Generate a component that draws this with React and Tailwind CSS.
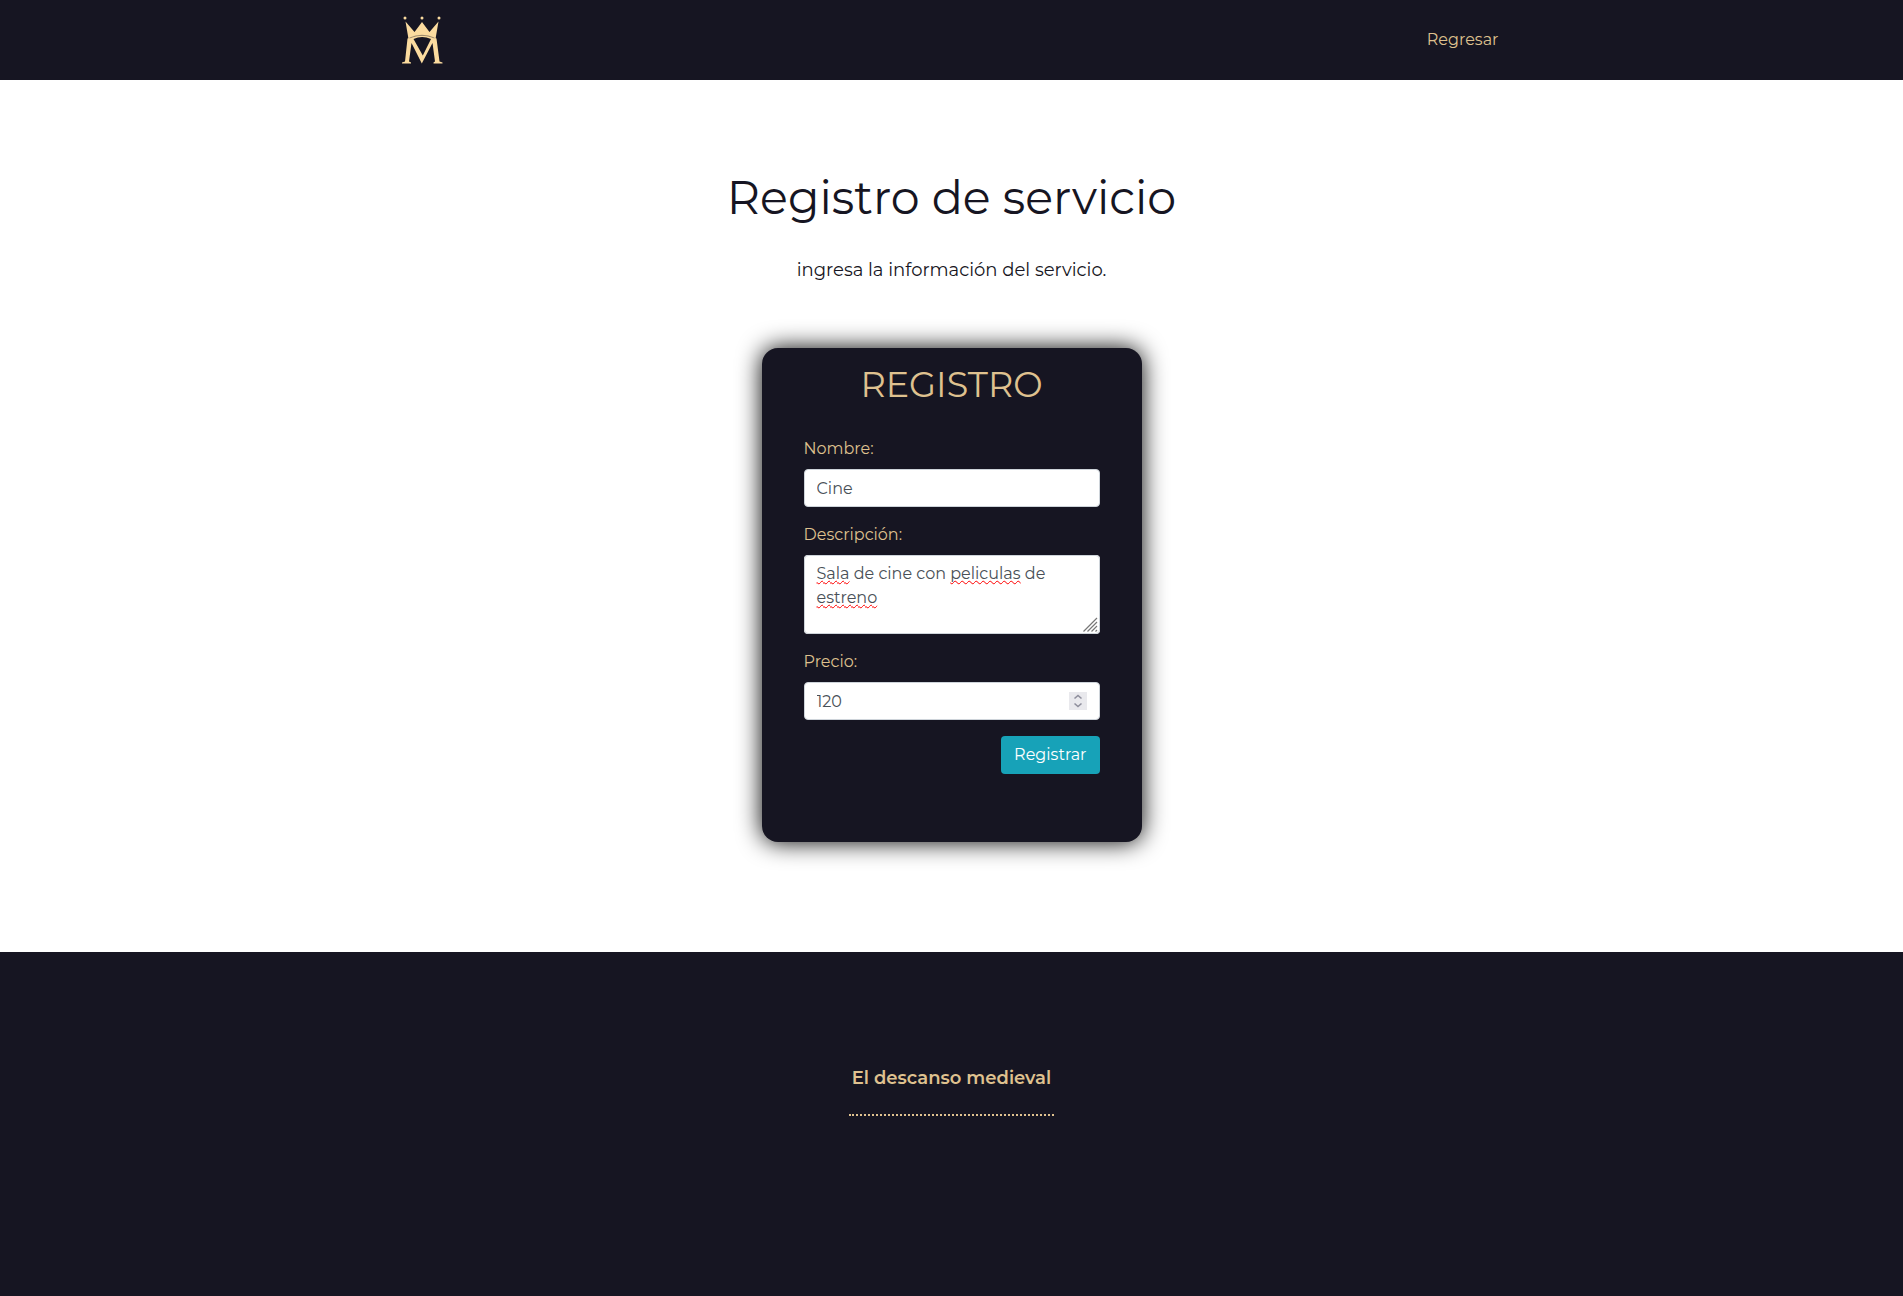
import { useState } from "react";

const inputClass =
  "block w-full rounded border border-[#ced4da] px-3 text-base leading-6 text-[#495057] outline-none";

function Logo() {
  return (
    <svg viewBox="0 0 42 50" className="h-[50px] w-[42px]" fill="#fbdb9f" aria-label="El descanso medieval" role="img">
      <circle cx="4" cy="3" r="1.5" />
      <circle cx="21" cy="3" r="1.5" />
      <circle cx="38" cy="3" r="1.5" />
      <path d="M4.500 6.500 L13.500 17 L21 7 L28.500 17 L37.500 6.500 L34.500 24 Q21 17.500 7.500 24 Z" />
      <path d="M6.500 23.500 Q21 17.500 35.500 23.500 L38.500 46.500 L41.500 47.500 V48.500 H32.500 V47.500 L34 46.500 L31.500 28 L20.800 48.500 L10.500 28 L8 46.500 L10 47.500 V48.500 H1 V47.500 L4 46.500 Z M12.500 24 L21.800 40.500 L30 24 Q21 20 12.500 24 Z" fillRule="evenodd" />
      <path d="M8.500 23 Q21 17.500 33.500 23" fill="none" stroke="#161522" strokeWidth="0.400" />
    </svg>
  );
}

export default function App() {
  const [name, setName] = useState("Cine");
  const [description, setDescription] = useState("Sala de cine con peliculas de estreno");
  const [price, setPrice] = useState("120");
  const flagged = ["Sala", "peliculas", "estreno"];

  return (
    <div className="min-h-screen bg-[#161522] font-[Montserrat,Inter,sans-serif] text-base text-[#161522]">
      <header className="bg-[#161522]">
        <nav className="mx-auto flex h-20 max-w-[1140px] items-center justify-between px-[15px]">
          <a href="#" className="ml-1">
            <Logo />
          </a>
          <a href="#" className="px-2 text-[#dfc18f]">Regresar</a>
        </nav>
      </header>

      <main className="bg-white pt-20 pb-[110px]">
        <h1 className="pt-2 text-center text-[46px] leading-[60px]">Registro de servicio</h1>
        <p className="mt-7 text-center text-lg leading-7">ingresa la información del servicio.</p>

        <form
          className="mx-auto mt-16 w-full max-w-[380px] rounded-2xl bg-[#161522] px-[42px] pt-4 pb-[68px] text-[#dfc18f] shadow-[0_0_25px_#000000]"
          onSubmit={(e) => e.preventDefault()}
        >
          <h2 className="mb-[31px] text-center text-[35px] leading-[42px]">REGISTRO</h2>

          <label htmlFor="nombre" className="mb-2 block leading-6">Nombre:</label>
          <input id="nombre" type="text" value={name} onChange={(e) => setName(e.target.value)} className={`${inputClass} mb-4 h-[38px] bg-white`} />

          <label htmlFor="descripcion" className="mb-2 block leading-6">Descripción:</label>
          <div className="relative mb-4 rounded bg-white">
            <div aria-hidden="true" className="absolute inset-0 px-[13px] py-[7px] leading-6 text-transparent">
              {description.split(" ").map((word, i) => (
                <span key={i}>
                  <span className={flagged.includes(word) ? "underline decoration-[#ff0000] decoration-wavy decoration-1 underline-offset-1 [text-decoration-skip-ink:none]" : ""}>{word}</span>{" "}
                </span>
              ))}
            </div>
            <textarea id="descripcion" spellCheck={false} value={description} onChange={(e) => setDescription(e.target.value)} className={`${inputClass} relative h-[79px] resize-none bg-transparent py-1.5`} />
            <svg viewBox="0 0 15 15" className="absolute right-0.5 bottom-0.5 size-[15px]" fill="none" stroke="#777777" strokeWidth="1.200" aria-hidden="true">
              <path d="M0.500 14.500 14 1M4.500 14.500 14 5M8.500 14.500 14 9M12.500 14.500 14 13" />
            </svg>
          </div>

          <label htmlFor="precio" className="mb-2 block leading-6">Precio:</label>
          <div className="relative mb-4">
            <input id="precio" type="number" value={price} onChange={(e) => setPrice(e.target.value)} className={`${inputClass} h-[38px] [appearance:textfield] bg-white [&::-webkit-inner-spin-button]:appearance-none`} />
            <svg viewBox="0 0 18 18" className="absolute top-2.5 right-[13px] size-[18px] bg-[#e9e9ed]" fill="none" stroke="#8f8f9d" strokeWidth="1.600" aria-hidden="true">
              <path d="M5.500 6.500 9 3.500 12.500 6.500M5.500 11.500 9 14.500 12.500 11.500" />
            </svg>
          </div>

          <div className="flex justify-end">
            <button type="submit" className="h-[38px] rounded bg-[#17a2b8] px-[13px] leading-6 text-white">Registrar</button>
          </div>
        </form>
      </main>

      <footer className="flex h-[342px] justify-center bg-[#161522] pt-[110px]">
        <div className="h-[54px] border-b-2 border-dotted border-[#dfc18f] px-[3px] text-lg leading-8 font-semibold text-[#dfc18f]">
          El descanso medieval
        </div>
      </footer>
    </div>
  );
}
